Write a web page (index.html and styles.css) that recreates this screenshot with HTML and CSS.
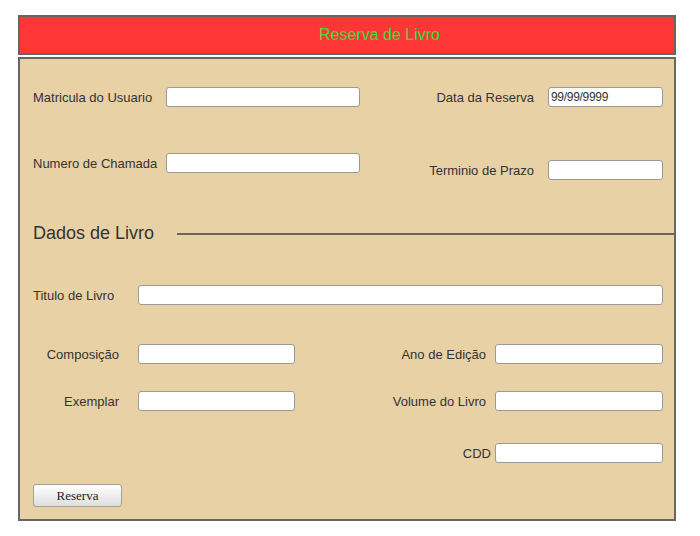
FILE: index.html
```html
<!DOCTYPE html>
<html lang="pt">
<head>
<meta charset="utf-8">
<title>Reserva de Livro</title>
<link rel="stylesheet" href="styles.css">
</head>
<body>
<div class="page">
  <header class="header">Reserva de Livro</header>
  <form class="panel">
    <div class="top">
      <div class="col-left">
        <div class="row r1">
          <label class="lbl lbl-top">Matricula do Usuario</label>
          <input class="inp w-left" type="text">
        </div>
        <div class="row r2l">
          <label class="lbl lbl-top">Numero de Chamada</label>
          <input class="inp w-left" type="text">
        </div>
      </div>
      <div class="col-right">
        <div class="row r1">
          <label class="lbl lbl-right">Data da Reserva</label>
          <input class="inp w-right" type="text" value="99/99/9999">
        </div>
        <div class="row r2r">
          <label class="lbl lbl-right">Terminio de Prazo</label>
          <input class="inp w-right" type="text">
        </div>
      </div>
    </div>

    <div class="section">
      <h2 class="section-title">Dados de Livro</h2>
      <div class="section-line"></div>
    </div>

    <div class="row r-titulo">
      <label class="lbl lbl-titulo">Titulo de Livro</label>
      <input class="inp grow" type="text">
    </div>

    <div class="row r-comp">
      <label class="lbl lbl-l2">Composição</label>
      <input class="inp w-l2" type="text">
      <div class="right-group">
        <label class="lbl lbl-r2">Ano de Edição</label>
        <input class="inp w-r2" type="text">
      </div>
    </div>

    <div class="row r-exem">
      <label class="lbl lbl-l2">Exemplar</label>
      <input class="inp w-l2" type="text">
      <div class="right-group">
        <label class="lbl lbl-r2">Volume do Livro</label>
        <input class="inp w-r2" type="text">
      </div>
    </div>

    <div class="row r-cdd">
      <div class="right-group">
        <label class="lbl lbl-r2 tight">CDD</label>
        <input class="inp w-r2" type="text">
      </div>
    </div>

    <div class="actions">
      <button class="btn" type="button">Reserva</button>
    </div>
  </form>
</div>
</body>
</html>
```

FILE: styles.css
```css
* {
  box-sizing: border-box;
}

body {
  margin: 0;
  background: #ffffff;
  font-family: "Liberation Sans", Arial, sans-serif;
  color: #333333;
}

.page {
  padding: 15px 0 0 18px;
  width: 676px;
}

.header {
  height: 40px;
  border: 2px solid #666666;
  background: #ff3636;
  color: #3cdc3c;
  font-size: 16px;
  line-height: 36px;
  text-align: center;
  padding-left: 65px;
}

.panel {
  margin: 2px 0 0 0;
  height: 464px;
  border: 2px solid #666666;
  background: #e8d1a5;
  padding: 0 0 12px 13px;
  display: flex;
  flex-direction: column;
}

.top {
  display: flex;
  justify-content: space-between;
  padding-right: 11px;
  height: 121px;
}

.col-left,
.col-right {
  display: flex;
  flex-direction: column;
}

.col-right {
  align-items: flex-end;
}

.row {
  display: flex;
  align-items: center;
  height: 20px;
}

.r1 { margin-top: 28px; }
.r2l { margin-top: 46px; }
.r2r { margin-top: 53px; }

.lbl {
  font-size: 13px;
  color: #333333;
  white-space: nowrap;
}

.lbl-top {
  width: 133px;
}

.lbl-right {
  text-align: right;
  margin-right: 14px;
}

.inp {
  flex-shrink: 0;
  height: 20px;
  border: 1px solid #9a9a9a;
  border-radius: 3px;
  background: #ffffff;
  padding: 1px 2px;
  font-family: "Liberation Sans", Arial, sans-serif;
  font-size: 12px;
  letter-spacing: -0.3px;
  color: #333333;
  outline: none;
}

.w-left { width: 194px; }
.w-right { width: 115px; }

.section {
  margin-top: 43px;
  display: flex;
  align-items: center;
  height: 21px;
}

.section-title {
  margin: 0;
  font-size: 18px;
  font-weight: normal;
  line-height: 21px;
  color: #333333;
}

.section-line {
  flex: 1;
  margin-left: 23px;
  border-top: 2px solid #666666;
}

.r-titulo {
  margin-top: 41px;
  padding-right: 11px;
}

.lbl-titulo {
  width: 105px;
}

.grow {
  flex: 1;
  flex-shrink: 1;
}

.r-comp {
  margin-top: 39px;
  padding-right: 11px;
}

.r-exem {
  margin-top: 27px;
  padding-right: 11px;
}

.r-cdd {
  margin-top: 32px;
  padding-right: 11px;
}

.lbl-l2 {
  width: 86px;
  text-align: right;
  margin-right: 19px;
}

.w-l2 { width: 157px; }

.right-group {
  margin-left: auto;
  display: flex;
  align-items: center;
}

.lbl-r2 {
  margin-right: 9px;
}

.lbl-r2.tight {
  margin-right: 4px;
}

.w-r2 { width: 168px; }

.actions {
  margin-top: 21px;
}

.btn {
  width: 89px;
  height: 23px;
  border: 1px solid #a0a0a0;
  border-radius: 3px;
  background: linear-gradient(#ffffff, #dedede);
  font-family: "Liberation Serif", "Times New Roman", serif;
  font-size: 13px;
  color: #222222;
  padding: 0;
}
```
